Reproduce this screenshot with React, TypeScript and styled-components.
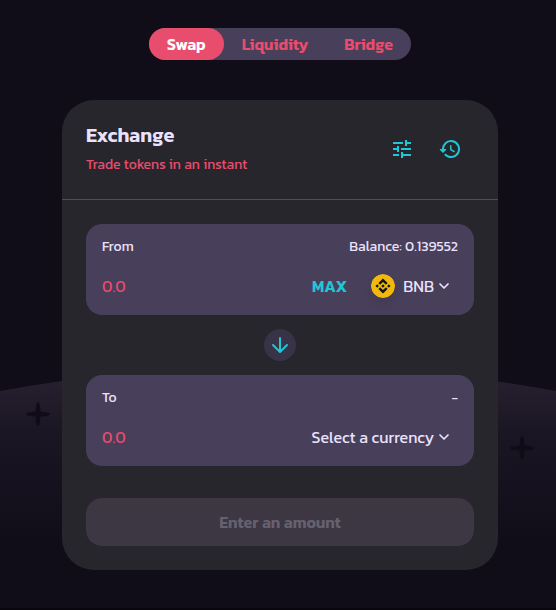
import React, { useState } from "react";
import styled, { createGlobalStyle } from "styled-components";
import { MdTune } from "react-icons/md";

const color = {
  page: "#100c18",
  card: "#27262c",
  panel: "#483f5a",
  text: "#eae2fc",
  pink: "#e84d6d",
  cyan: "#1fc7d4",
};

const GlobalStyle = createGlobalStyle`
  *, *::before, *::after { box-sizing: border-box; }
  body { margin: 0; background: ${color.page}; }
  button, input { font: inherit; color: inherit; border: 0; padding: 0; background: none; }
  button { cursor: pointer; }
`;

const Page = styled.main`
  position: relative;
  min-height: 100vh;
  padding: 28px 58px 38px 62px;
  border-bottom: 2px solid #09070d;
  display: flex;
  flex-direction: column;
  align-items: center;
  gap: 40px;
  overflow: hidden;
  background: ${color.page};
  color: ${color.text};
  font-family: Kanit, Roboto, sans-serif;
  font-size: 16px;
  line-height: 24px;
`;

const Backdrop = styled.svg`
  position: absolute;
  left: 0;
  top: 360px;
  width: 100%;
  height: 200px;
`;

const Star = styled.svg<{ $side: "left" | "right"; $top: number }>`
  position: absolute;
  top: ${(p) => p.$top}px;
  ${(p) => (p.$side === "left" ? "left: 26px;" : "right: 22px;")}
  width: 24px;
  height: 24px;
  fill: #100c17;
`;

const Tabs = styled.nav`
  position: relative;
  display: flex;
  border-radius: 16px;
  background: ${color.panel};
`;

const Tab = styled.button<{ $active: boolean }>`
  height: 32px;
  padding: 0 18px;
  border-radius: 16px;
  font-weight: 600;
  color: ${(p) => (p.$active ? "#ffffff" : color.pink)};
  background: ${(p) => (p.$active ? color.pink : "transparent")};
`;

const Card = styled.section`
  position: relative;
  width: 100%;
  max-width: 436px;
  border-radius: 32px;
  background: ${color.card};
`;

const CardHeader = styled.header`
  display: flex;
  align-items: center;
  justify-content: space-between;
  height: 100px;
  padding: 0 24px 2px;
  border-bottom: 1px solid #524b63;
`;

const Heading = styled.div`
  padding-top: 2px;
`;

const Title = styled.h1`
  margin: 0 0 6px;
  font-size: 20px;
  line-height: 24px;
  font-weight: 600;
`;

const Subtitle = styled.p`
  margin: 0;
  font-size: 14px;
  line-height: 24px;
  color: ${color.pink};
`;

const Actions = styled.div`
  display: flex;
`;

const IconButton = styled.button`
  display: grid;
  place-items: center;
  width: 48px;
  height: 48px;
  color: ${color.cyan};
`;

const Form = styled.form`
  display: flex;
  flex-direction: column;
  padding: 24px;
`;

const Panel = styled.div`
  display: flex;
  flex-direction: column;
  gap: 16px;
  padding: 12px 16px 16px;
  border-radius: 16px;
  background: ${color.panel};
`;

const PanelRow = styled.div`
  display: flex;
  align-items: center;
  justify-content: space-between;
  padding-top: 2px;
  font-size: 14px;
  line-height: 18px;
`;

const AmountRow = styled.div`
  display: flex;
  align-items: center;
  height: 27px;
`;

const Amount = styled.input`
  flex: 1;
  min-width: 0;
  color: ${color.pink};
  outline: none;
  &::placeholder { color: ${color.pink}; opacity: 1; }
`;

const MaxButton = styled.button`
  margin-right: 24px;
  font-weight: 600;
  color: ${color.cyan};
`;

const CurrencyButton = styled.button`
  display: flex;
  align-items: center;
  padding-right: 8px;
`;

const TokenIcon = styled.svg`
  margin-right: 8px;
  border-radius: 50%;
  box-shadow: 0 6px 10px rgba(0, 0, 0, 0.08);
`;

const Chevron = styled.svg`
  margin-left: 4px;
`;

const SwitchButton = styled.button`
  align-self: center;
  display: grid;
  place-items: center;
  width: 32px;
  height: 32px;
  margin: 14px 0;
  border-radius: 50%;
  background: #383346;
`;

const SubmitButton = styled.button`
  height: 48px;
  margin-top: 32px;
  border-radius: 16px;
  background: #3c3742;
  color: #666171;
  font-weight: 600;
  cursor: default;
`;

const HistoryIcon = () => (
  <svg width="24" height="24" viewBox="0 0 24 24" fill="currentColor" aria-hidden="true">
    <path d="M13 3a9 9 0 0 0-9 9H2.2c-.45 0-.67.54-.35.85l2.79 2.8c.2.2.51.2.71 0l2.79-2.8c.31-.31.09-.85-.35-.85H6a7 7 0 1 1 2.1 5c-.4-.4-1-.4-1.4 0s-.4 1 0 1.4A9 9 0 1 0 13 3Zm-.25 5a.75.75 0 0 0-.75.75v3.68c0 .35.19.68.49.86l3.12 1.85a.75.75 0 0 0 .77-1.29l-2.88-1.71V8.75a.75.75 0 0 0-.75-.75Z" />
  </svg>
);

const BnbIcon = () => (
  <TokenIcon width="24" height="24" viewBox="0 0 32 32" aria-hidden="true">
    <circle cx="16" cy="16" r="16" fill="#f0b90b" />
    <path
      fill="#12161c"
      d="M12.116 14.404 16 10.52l3.886 3.886 2.26-2.26L16 6l-6.144 6.144 2.26 2.26ZM6 16l2.26-2.26L10.52 16l-2.26 2.26L6 16Zm6.116 1.596L16 21.48l3.886-3.886 2.26 2.259L16 26l-6.144-6.144-.003-.003 2.263-2.257ZM21.48 16l2.26-2.26L26 16l-2.26 2.26L21.48 16Zm-3.188-.002L16 13.706 13.71 16 16 18.294 18.294 16l-.002-.002Z"
    />
  </TokenIcon>
);

const ChevronIcon = () => (
  <Chevron width="12" height="12" viewBox="0 0 12 12" fill="none" aria-hidden="true">
    <path d="M2 4l4 4 4-4" stroke="currentColor" strokeWidth="1.7" strokeLinecap="round" strokeLinejoin="round" />
  </Chevron>
);

const StarShape = ({ side, top }: { side: "left" | "right"; top: number }) => (
  <Star $side={side} $top={top} viewBox="0 0 24 24" aria-hidden="true">
    <path d="M12 0c1.700 0 2 4.500 2.600 9.400 4.900.6 9.400.9 9.400 2.600s-4.500 2-9.400 2.600c-.6 4.900-.9 9.400-2.600 9.400s-2-4.500-2.600-9.400c-4.900-.6-9.400-.9-9.400-2.600s4.500-2 9.400-2.600c.6-4.900.9-9.400 2.600-9.400Z" />
  </Star>
);

type CurrencyPanelProps = {
  id: string;
  label: string;
  balance: string;
  children: React.ReactNode;
};

const CurrencyPanel = ({ id, label, balance, children }: CurrencyPanelProps) => {
  const [value, setValue] = useState("");
  return (
    <Panel>
      <PanelRow>
        <label htmlFor={id}>{label}</label>
        <span>{balance}</span>
      </PanelRow>
      <AmountRow>
        <Amount
          id={id}
          inputMode="decimal"
          placeholder="0.0"
          value={value}
          onChange={(e) => setValue(e.target.value)}
        />
        {children}
      </AmountRow>
    </Panel>
  );
};

export default function App() {
  const [tab, setTab] = useState("Swap");
  return (
    <>
      <GlobalStyle />
      <Page>
        <Backdrop viewBox="0 0 560 200" preserveAspectRatio="none" aria-hidden="true">
          <defs>
            <linearGradient id="hill" x1="0" y1="20" x2="0" y2="185" gradientUnits="userSpaceOnUse">
              <stop offset="0" stopColor="#261f2f" />
              <stop offset="0.3" stopColor="#1b1624" />
              <stop offset="1" stopColor={color.page} />
            </linearGradient>
          </defs>
          <path d="M0 31Q280-20 560 31V200H0Z" fill="url(#hill)" />
        </Backdrop>
        <StarShape side="left" top={402} />
        <StarShape side="right" top={436} />
        <Tabs aria-label="Exchange sections">
          {["Swap", "Liquidity", "Bridge"].map((name) => (
            <Tab key={name} type="button" $active={tab === name} onClick={() => setTab(name)}>
              {name}
            </Tab>
          ))}
        </Tabs>
        <Card>
          <CardHeader>
            <Heading>
              <Title>Exchange</Title>
              <Subtitle>Trade tokens in an instant</Subtitle>
            </Heading>
            <Actions>
              <IconButton type="button" aria-label="Settings">
                <MdTune size={24} />
              </IconButton>
              <IconButton type="button" aria-label="Recent transactions">
                <HistoryIcon />
              </IconButton>
            </Actions>
          </CardHeader>
          <Form onSubmit={(e) => e.preventDefault()}>
            <CurrencyPanel id="from-amount" label="From" balance="Balance: 0.139552">
              <MaxButton type="button">MAX</MaxButton>
              <CurrencyButton type="button">
                <BnbIcon />
                BNB
                <ChevronIcon />
              </CurrencyButton>
            </CurrencyPanel>
            <SwitchButton type="button" aria-label="Switch currencies">
              <svg width="24" height="24" viewBox="0 0 24 24" fill="none" aria-hidden="true">
                <path d="M12 5v14M5 12l7 7 7-7" stroke={color.cyan} strokeWidth="2" strokeLinecap="round" strokeLinejoin="round" />
              </svg>
            </SwitchButton>
            <CurrencyPanel id="to-amount" label="To" balance="-">
              <CurrencyButton type="button">
                Select a currency
                <ChevronIcon />
              </CurrencyButton>
            </CurrencyPanel>
            <SubmitButton type="submit" disabled>
              Enter an amount
            </SubmitButton>
          </Form>
        </Card>
      </Page>
    </>
  );
}
